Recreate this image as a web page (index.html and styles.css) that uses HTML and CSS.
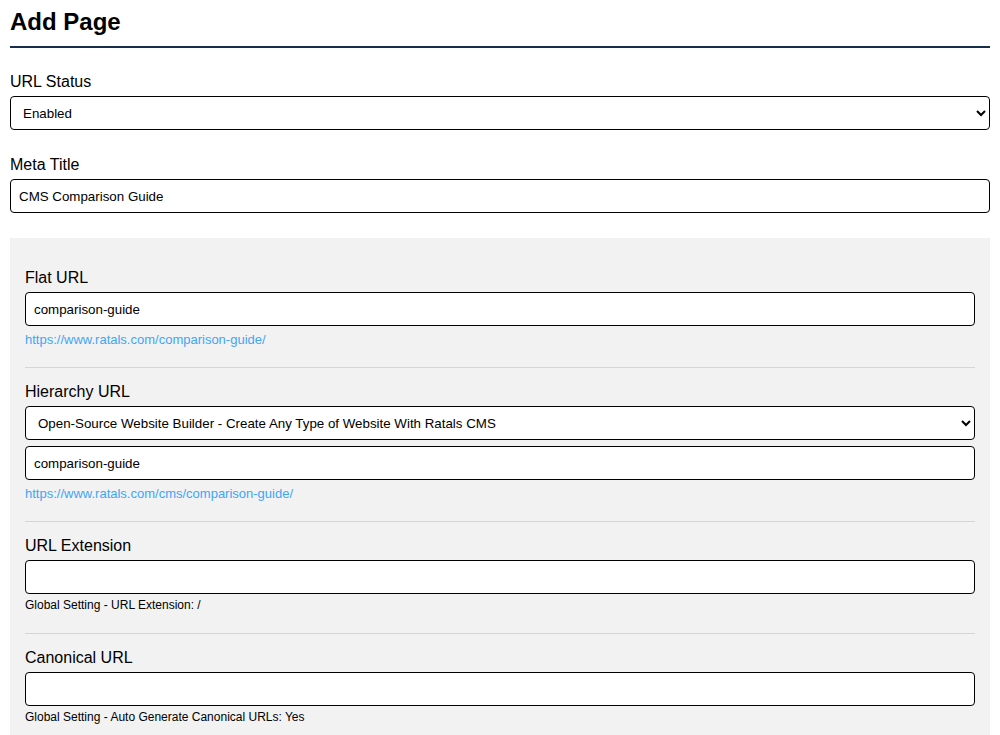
FILE: index.html
```html
<!DOCTYPE html>
<html lang="en">

<head>
    <meta charset="UTF-8">
    <meta name="viewport" content="width=device-width, initial-scale=1.0">
    <title>Add Page</title>
    <link rel="stylesheet" href="styles.css">
</head>

<body>
    <div class="page">
        <h1>Add Page</h1>

        <div class="field">
            <label for="status">URL Status</label>
            <select id="status">
                <option>Enabled</option>
                <option>Disabled</option>
            </select>
        </div>

        <div class="field">
            <label for="meta-title">Meta Title</label>
            <input type="text" id="meta-title" value="CMS Comparison Guide">
        </div>

        <div class="url-panel">
            <div class="group">
                <label for="flat-url">Flat URL</label>
                <input type="text" id="flat-url" value="comparison-guide">
                <a class="preview" href="#">https://www.ratals.com/comparison-guide/</a>
            </div>

            <div class="group">
                <label for="parent">Hierarchy URL</label>
                <select id="parent">
                    <option>Open-Source Website Builder - Create Any Type of Website With Ratals CMS</option>
                </select>
                <input type="text" class="stacked" value="comparison-guide">
                <a class="preview" href="#">https://www.ratals.com/cms/comparison-guide/</a>
            </div>

            <div class="group">
                <label for="extension">URL Extension</label>
                <input type="text" id="extension">
                <small>Global Setting - URL Extension: /</small>
            </div>

            <div class="group">
                <label for="canonical">Canonical URL</label>
                <input type="text" id="canonical">
                <small>Global Setting - Auto Generate Canonical URLs: Yes</small>
            </div>
        </div>
    </div>
</body>

</html>
```

FILE: styles.css
```css
body {
    margin: 0;
    font-family: Arial, "Liberation Sans", sans-serif;
    color: #000;
    background: #fff;
}

.page {
    padding: 8px 10px 40px;
}

h1 {
    margin: 0 0 24px;
    padding-bottom: 10px;
    font-size: 24px;
    line-height: 28px;
    border-bottom: 2px solid #152f48;
}

label {
    display: block;
    font-size: 16px;
    line-height: 20px;
    margin-bottom: 4px;
}

input,
select {
    display: block;
    box-sizing: border-box;
    width: 100%;
    height: 34px;
    padding: 0 8px;
    font-family: Arial, "Liberation Sans", sans-serif;
    font-size: 13.333px;
    color: #000;
    background: #fff;
    border: 1px solid #000;
    border-radius: 4px;
}

.field {
    margin-bottom: 25px;
}

.url-panel {
    background: #f2f2f2;
    padding: 30px 15px 10px;
}

.group {
    padding-bottom: 20px;
    margin-bottom: 14px;
    border-bottom: 1px solid #d6d6d6;
}

.group:last-child {
    border-bottom: none;
}

.stacked {
    margin-top: 6px;
}

.preview {
    display: block;
    margin-top: 6px;
    font-size: 13px;
    line-height: 15px;
    color: #42a5f5;
    text-decoration: none;
}

small {
    display: block;
    margin-top: 4px;
    font-size: 12px;
    line-height: 15px;
}
```
